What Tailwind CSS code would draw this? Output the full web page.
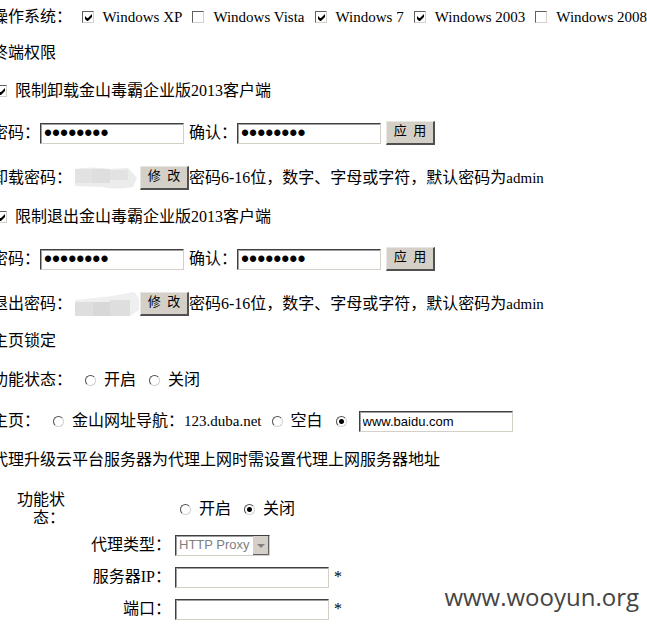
<!DOCTYPE html>
<html lang="zh-CN">
<head>
<meta charset="utf-8">
<title>终端设置</title>
<script src="https://cdn.jsdelivr.net/npm/@tailwindcss/browser@4"></script>
</head>
<body class="relative overflow-x-hidden bg-white text-black">
<svg class="hidden"><symbol id="tick" viewBox="0 0 13 13"><path d="M3 5v3l2 2h1l4-4V3L6 7H5z" fill="#000"/></symbol></svg>
<form class="-ml-2 pt-px whitespace-nowrap font-['Liberation_Serif','Noto_Sans_CJK_SC',serif] text-[16px] leading-[18px]
 [&_label]:flex [&_label]:items-center
 [&_input[type=checkbox]]:col-start-1 [&_input[type=checkbox]]:row-start-1 [&_input[type=checkbox]]:size-3 [&_input[type=checkbox]]:appearance-none [&_input[type=checkbox]]:border [&_input[type=checkbox]]:border-[#d4d0c8] [&_input[type=checkbox]]:border-t-[#606060] [&_input[type=checkbox]]:border-l-[#606060]
 [&_input[type=radio]]:size-[11px] [&_input[type=radio]]:appearance-none [&_input[type=radio]]:rounded-full [&_input[type=radio]]:border [&_input[type=radio]]:border-[#d4d0c8] [&_input[type=radio]]:border-t-[#505050] [&_input[type=radio]]:border-l-[#505050] [&_input[type=radio]:checked]:bg-[radial-gradient(circle,#000_2px,transparent_3px)]
 [&_.field]:h-[21px] [&_.field]:border [&_.field]:border-[#d4d0c8] [&_.field]:border-t-[#404040] [&_.field]:border-l-[#404040] [&_.field]:shadow-[inset_1px_1px_#a0a0a0] [&_.field]:px-[3px] [&_.field]:font-['Liberation_Sans',sans-serif] [&_.field]:text-[13px] [&_input[type=password]]:text-[23px]
 [&_button]:h-6 [&_button]:w-[49px] [&_button]:border [&_button]:border-b-2 [&_button]:border-r-2 [&_button]:border-[#e8e6e0] [&_button]:border-r-[#505050] [&_button]:border-b-[#505050] [&_button]:bg-[#d4d0c8] [&_button]:pb-1 [&_button]:text-[13px] [&_button]:leading-4">

  <div class="flex h-8 items-center">
    <span class="w-[92px]">操作系统：</span>
    <div class="flex gap-[10px] text-[15px]">
      <label class="gap-2"><span class="grid"><input type="checkbox" class="peer" checked><svg class="pointer-events-none invisible col-start-1 row-start-1 size-[13px] peer-checked:visible"><use href="#tick"/></svg></span>Windows XP</label>
      <label class="gap-2"><span class="grid"><input type="checkbox" class="peer"><svg class="pointer-events-none invisible col-start-1 row-start-1 size-[13px] peer-checked:visible"><use href="#tick"/></svg></span>Windows Vista</label>
      <label class="gap-2"><span class="grid"><input type="checkbox" class="peer" checked><svg class="pointer-events-none invisible col-start-1 row-start-1 size-[13px] peer-checked:visible"><use href="#tick"/></svg></span>Windows 7</label>
      <label class="gap-2"><span class="grid"><input type="checkbox" class="peer" checked><svg class="pointer-events-none invisible col-start-1 row-start-1 size-[13px] peer-checked:visible"><use href="#tick"/></svg></span>Windows 2003</label>
      <label class="gap-2"><span class="grid"><input type="checkbox" class="peer"><svg class="pointer-events-none invisible col-start-1 row-start-1 size-[13px] peer-checked:visible"><use href="#tick"/></svg></span>Windows 2008</label>
    </div>
  </div>

  <h2 class="flex h-10 items-center">终端权限</h2>

  <div class="flex h-9 items-center pl-[3px]">
    <label class="gap-[7px]"><span class="grid"><input type="checkbox" class="peer" checked><svg class="pointer-events-none invisible col-start-1 row-start-1 size-[13px] peer-checked:visible"><use href="#tick"/></svg></span>限制卸载金山毒霸企业版2013客户端</label>
  </div>
  <div class="flex h-12 items-center gap-[5px]">
    <label>密码：<input type="password" class="field w-36" value="12345678"></label>
    <label>确认：<input type="password" class="field w-36" value="12345678"></label>
    <button type="button">应&ensp;用</button>
  </div>
  <div class="flex h-[42px] items-center">
    <span>卸载密码：</span>
    <svg class="h-6 w-[68px]" viewBox="0 0 68 24" aria-hidden="true"><path d="M3 3Q20 0 38 3L56 2L65 12L61 21Q45 24 30 21L3 20Z" fill="#ececec"/><path d="M3 3h17v14H3zM38 4h18v10H38z" fill="#e2e2e2"/><path d="M20 3h18v14H20z" fill="#dedede"/></svg>
    <button type="button">修&ensp;改</button>
    <span>密码6-16位，数字、字母或字符，默认密码为<span class="text-[15px]">admin</span></span>
  </div>

  <div class="flex h-9 items-center pl-[3px]">
    <label class="gap-[7px]"><span class="grid"><input type="checkbox" class="peer" checked><svg class="pointer-events-none invisible col-start-1 row-start-1 size-[13px] peer-checked:visible"><use href="#tick"/></svg></span>限制退出金山毒霸企业版2013客户端</label>
  </div>
  <div class="flex h-12 items-center gap-[5px]">
    <label>密码：<input type="password" class="field w-36" value="12345678"></label>
    <label>确认：<input type="password" class="field w-36" value="12345678"></label>
    <button type="button">应&ensp;用</button>
  </div>
  <div class="flex h-[42px] items-center">
    <span>退出密码：</span>
    <svg class="h-6 w-[68px]" viewBox="0 0 68 24" aria-hidden="true"><path d="M3 8L40 4L62 0L67 6V18L58 24H3Z" fill="#efefef"/><path d="M3 10h18v14H3zM38 8h20v16H38z" fill="#dedede"/><path d="M21 10h17v14H21z" fill="#d8d8d8"/></svg>
    <button type="button">修&ensp;改</button>
    <span>密码6-16位，数字、字母或字符，默认密码为<span class="text-[15px]">admin</span></span>
  </div>

  <h2 class="flex h-8 items-center">主页锁定</h2>
  <div class="flex h-[46px] items-center">
    <span class="w-[93px]">功能状态：</span>
    <div class="flex gap-[13px]">
      <label class="gap-2"><input type="radio" name="lock">开启</label>
      <label class="gap-2"><input type="radio" name="lock">关闭</label>
    </div>
  </div>
  <div class="flex h-9 items-center">
    <span class="w-[61px]">主页：</span>
    <label class="mr-[10px] gap-2"><input type="radio" name="home"><span>金山网址导航：<span class="text-[15px]">123.duba.net</span></span></label>
    <label class="mr-[13px] gap-2"><input type="radio" name="home">空白</label>
    <input type="radio" name="home" aria-label="自定义主页" checked>
    <input type="text" class="field ml-3 w-[154px]" aria-label="主页地址" value="www.baidu.com">
  </div>
  <p class="flex h-[42px] items-center">代理升级云平台服务器为代理上网时需设置代理上网服务器地址</p>

  <div class="flex h-12 items-center pt-2">
    <span class="mr-[115px] ml-[25px] w-12 text-right whitespace-normal">功能状态：</span>
    <div class="flex gap-[13px]">
      <label class="gap-2"><input type="radio" name="proxy">开启</label>
      <label class="gap-2"><input type="radio" name="proxy" checked>关闭</label>
    </div>
  </div>
  <div class="grid auto-rows-[32px] grid-cols-[179px_auto] items-center gap-x-1">
    <label for="type" class="justify-end">代理类型：</label>
    <div class="grid w-[95px]">
      <select id="type" disabled class="field col-start-1 row-start-1 w-full appearance-none text-[#808080] opacity-100"><option>HTTP Proxy</option></select>
      <svg class="pointer-events-none col-start-1 row-start-1 mr-px h-[19px] w-4 self-center justify-self-end" viewBox="0 0 16 19" aria-hidden="true"><path d="M0 0h16v19H0z" fill="#d4d0c8"/><path d="M15.500 0v18.500H0" fill="none" stroke="#606060"/><path d="M4 8h8l-4 4z" fill="#808080"/></svg>
    </div>
    <label for="ip" class="justify-end">服务器IP：</label>
    <div class="flex items-center gap-[5px]"><input id="ip" type="text" class="field w-[154px]"><span>*</span></div>
    <label for="port" class="justify-end">端口：</label>
    <div class="flex items-center gap-[5px]"><input id="port" type="text" class="field w-[154px]"><span>*</span></div>
  </div>
</form>
<div class="absolute right-2 bottom-3 font-['Open_Sans',sans-serif] text-[24px] leading-8 text-[#444]">www.wooyun.org</div>
</body>
</html>
